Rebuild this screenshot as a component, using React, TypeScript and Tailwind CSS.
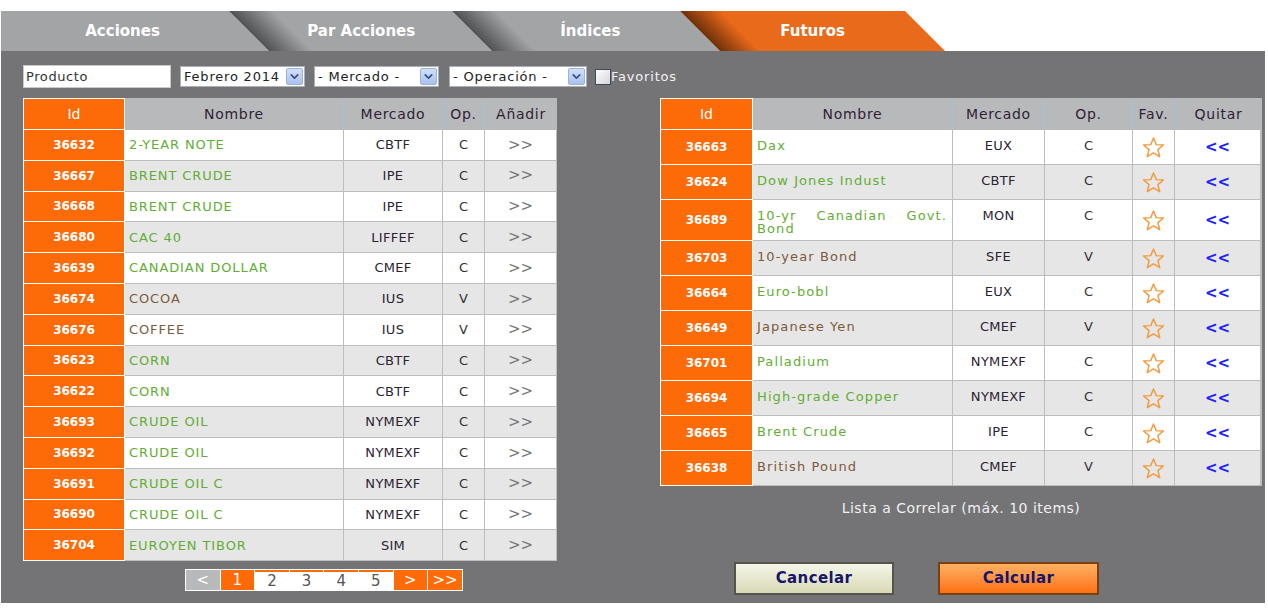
import { ChevronDown } from "lucide-react";

type Row = { id: string; name: string; market: string; op: string };

const leftRows: Row[] = [
  { id: "36632", name: "2-YEAR NOTE", market: "CBTF", op: "C" },
  { id: "36667", name: "BRENT CRUDE", market: "IPE", op: "C" },
  { id: "36668", name: "BRENT CRUDE", market: "IPE", op: "C" },
  { id: "36680", name: "CAC 40", market: "LIFFEF", op: "C" },
  { id: "36639", name: "CANADIAN DOLLAR", market: "CMEF", op: "C" },
  { id: "36674", name: "COCOA", market: "IUS", op: "V" },
  { id: "36676", name: "COFFEE", market: "IUS", op: "V" },
  { id: "36623", name: "CORN", market: "CBTF", op: "C" },
  { id: "36622", name: "CORN", market: "CBTF", op: "C" },
  { id: "36693", name: "CRUDE OIL", market: "NYMEXF", op: "C" },
  { id: "36692", name: "CRUDE OIL", market: "NYMEXF", op: "C" },
  { id: "36691", name: "CRUDE OIL C", market: "NYMEXF", op: "C" },
  { id: "36690", name: "CRUDE OIL C", market: "NYMEXF", op: "C" },
  { id: "36704", name: "EUROYEN TIBOR", market: "SIM", op: "C" },
];

const rightRows: Row[] = [
  { id: "36663", name: "Dax", market: "EUX", op: "C" },
  { id: "36624", name: "Dow Jones Indust", market: "CBTF", op: "C" },
  { id: "36689", name: "10-yr Canadian Govt. Bond", market: "MON", op: "C" },
  { id: "36703", name: "10-year Bond", market: "SFE", op: "V" },
  { id: "36664", name: "Euro-bobl", market: "EUX", op: "C" },
  { id: "36649", name: "Japanese Yen", market: "CMEF", op: "V" },
  { id: "36701", name: "Palladium", market: "NYMEXF", op: "C" },
  { id: "36694", name: "High-grade Copper", market: "NYMEXF", op: "C" },
  { id: "36665", name: "Brent Crude", market: "IPE", op: "C" },
  { id: "36638", name: "British Pound", market: "CMEF", op: "V" },
];

const Star = () => (
  <svg width="23" height="23" viewBox="0 0 24 24" fill="none" stroke="#f29a3d" strokeWidth="1.5" strokeLinejoin="round">
    <polygon points="12,2 14.9,9 22.4,9.4 16.6,14.2 18.5,21.6 12,17.5 5.5,21.6 7.4,14.2 1.6,9.4 9.1,9" />
  </svg>
);

const Select = ({ label, className }: { label: string; className: string }) => (
  <div className={`flex items-center justify-between h-[21px] bg-white border border-[#a9b0ba] pl-[3px] pr-px text-[13px] tracking-[0.8px] text-[#222] ${className}`}>
    <span>{label}</span>
    <span className="w-[17px] h-[17px] flex items-center justify-center bg-linear-to-b from-[#d3e0fb] to-[#a9c0ef] border border-[#9cb1dc] rounded-[2px]">
      <ChevronDown size={13} strokeWidth={3.2} color="#3a5286" />
    </span>
  </div>
);

const idCell = "flex items-center justify-center bg-[#fd6b09] border-l border-r border-b border-white text-white font-bold text-[12px]";
const headCell = "flex items-center justify-center bg-[#b8b9bb] border-r border-[#a7bfd7] text-[14px] tracking-[0.7px] text-[#2f1f35]";

const Tabs = () => (
  <div className="flex h-[40px] overflow-hidden">
    <div className="flex-none w-[279px] -ml-[31px] pl-[25px] h-full skew-x-45 bg-[#a3a4a6] flex items-center justify-center">
      <span className="-skew-x-45 text-white font-bold text-[15px]">Acciones</span>
    </div>
    <div className="flex-none w-[223px] h-full skew-x-45 bg-[linear-gradient(to_right,#505153,#a3a4a6_44px)] flex items-center justify-center">
      <span className="-skew-x-45 text-white font-bold text-[15px]">Par Acciones</span>
    </div>
    <div className="flex-none w-[228px] pl-[8px] h-full skew-x-45 bg-[linear-gradient(to_right,#505153,#a3a4a6_44px)] flex items-center justify-center">
      <span className="-skew-x-45 text-white font-bold text-[15px]">Índices</span>
    </div>
    <div className="flex-none w-[225px] h-full skew-x-45 bg-[linear-gradient(to_right,#6e3008,#e86a1a_40px)] flex items-center justify-center">
      <span className="-skew-x-45 text-white font-bold text-[15px]">Futuros</span>
    </div>
  </div>
);

const LeftTable = () => (
  <div className="w-[534px]">
    <div className="flex h-[32px]">
      <div className={`w-[102px] border-t ${idCell} font-normal text-[14px]`}>Id</div>
      <div className={`w-[219px] ${headCell}`}>Nombre</div>
      <div className={`w-[99px] ${headCell}`}>Mercado</div>
      <div className={`w-[42px] ${headCell}`}>Op.</div>
      <div className={`w-[72px] ${headCell} border-r-0`}>Añadir</div>
    </div>
    {leftRows.map((r, i) => {
      const bg = i % 2 ? "bg-[#e6e6e6]" : "bg-white";
      const cell = `flex items-center border-b border-r border-[#bdbdbd] ${bg}`;
      return (
        <div key={r.id + i} className="flex h-[30.8px]">
          <div className={`w-[102px] ${idCell}`}>{r.id}</div>
          <div className={`w-[219px] pl-[4px] text-[13px] tracking-[0.9px] ${cell} ${r.op === "V" ? "text-[#7b5b3b]" : "text-[#62ad34]"}`}>{r.name}</div>
          <div className={`w-[99px] justify-center text-[13px] tracking-[0.3px] text-[#2b2333] ${cell}`}>{r.market}</div>
          <div className={`w-[42px] justify-center text-[13px] text-[#333] ${cell}`}>{r.op}</div>
          <div className={`w-[72px] justify-center text-[15px] text-[#777] ${cell}`}>&gt;&gt;</div>
        </div>
      );
    })}
  </div>
);

const RightTable = () => (
  <div className="w-[602px]">
    <div className="flex h-[32px]">
      <div className={`w-[93px] border-t ${idCell} font-normal text-[14px]`}>Id</div>
      <div className={`w-[200px] ${headCell}`}>Nombre</div>
      <div className={`w-[92px] ${headCell}`}>Mercado</div>
      <div className={`w-[88px] ${headCell}`}>Op.</div>
      <div className={`w-[42px] ${headCell}`}>Fav.</div>
      <div className={`w-[87px] ${headCell} border-r-0`}>Quitar</div>
    </div>
    {rightRows.map((r, i) => {
      const bg = i % 2 ? "bg-[#e6e6e6]" : "bg-white";
      const cell = `border-b border-r border-[#bdbdbd] ${bg}`;
      return (
        <div key={r.id} className={`flex ${i === 2 ? "h-[41px]" : "h-[35px]"}`}>
          <div className={`w-[93px] ${idCell}`}>{r.id}</div>
          <div className={`w-[200px] pl-[4px] pr-[5px] pt-[9px] leading-[13px] text-[13px] tracking-[1.1px] text-justify ${cell} ${r.op === "V" ? "text-[#7b5b3b]" : "text-[#62ad34]"}`}>{r.name}</div>
          <div className={`w-[92px] pt-[9px] leading-[14px] text-center text-[13px] tracking-[0.3px] text-[#2b2333] ${cell}`}>{r.market}</div>
          <div className={`w-[88px] pt-[9px] leading-[14px] text-center text-[13px] text-[#333] ${cell}`}>{r.op}</div>
          <div className={`w-[42px] flex items-center justify-center ${cell}`}><Star /></div>
          <div className={`w-[87px] flex items-center justify-center font-bold text-[15px] text-[#1f1fff] ${cell} border-[#b3b3b3] border-r-2`}>&lt;&lt;</div>
        </div>
      );
    })}
  </div>
);

const Pagination = () => (
  <div className="ml-[162px] mt-[8px] flex w-fit p-px gap-px bg-white h-[22px] text-[15px]">
    <span className="w-[33.6px] flex items-center justify-center bg-[#b8b9bb] text-white">&lt;</span>
    <span className="w-[33.6px] flex items-center justify-center bg-[#fd6b09] text-white">1</span>
    {["2", "3", "4", "5"].map((p) => (
      <span key={p} className="w-[33.6px] flex items-center justify-center bg-white border-t-2 border-[#fd6b09] text-[#555]">{p}</span>
    ))}
    <span className="w-[33.6px] flex items-center justify-center bg-[#fd6b09] text-white">&gt;</span>
    <span className="w-[33.6px] flex items-center justify-center bg-[#fd6b09] text-white">&gt;&gt;</span>
  </div>
);

export default function App() {
  return (
    <div className="h-[612px] bg-white pt-[11px] pl-px font-['DejaVu_Sans',Verdana,sans-serif]">
      <div className="w-[1264px]">
        <Tabs />
        <div className="h-[552px] bg-[#747476] pl-[22px] pt-[14px]">
          {/* Filtros */}
          <div className="flex items-center h-[23px]">
            <div className="w-[148px] h-[23px] bg-white border border-[#c9c9c9] pl-[2px] text-[13px] tracking-[0.6px] text-[#333] flex items-center">Producto</div>
            <Select label="Febrero 2014" className="ml-[9px] w-[125px]" />
            <Select label="- Mercado -" className="ml-[9px] w-[125px]" />
            <Select label="- Operación -" className="ml-[10px] w-[138px]" />
            <span className="ml-[8px] w-[16px] h-[16px] border border-[#3b4a63] bg-linear-to-br from-white to-[#d6d6d6]" />
            <span className="text-[13px] tracking-[0.8px] text-[#f2f2f2]">Favoritos</span>
          </div>

          <div className="flex mt-[10px]">
            <div>
              <LeftTable />
              <Pagination />
            </div>
            <div className="ml-[103px]">
              <RightTable />
              <div className="mt-[14px] text-center text-[14px] tracking-[0.5px] text-[#f0f0f0] leading-[16px]">Lista a Correlar (máx. 10 items)</div>
              <div className="flex mt-[46px] ml-[74px]">
                <button className="w-[160px] h-[33px] border-2 border-[#55554d] bg-linear-to-b from-[#f5f5e8] to-[#d9d9b6] text-[#16166a] font-bold text-[15px] tracking-[0.4px]">Cancelar</button>
                <button className="ml-[44px] w-[161px] h-[33px] border-2 border-[#7a4010] bg-linear-to-b from-[#ffb060] to-[#ff7008] text-[#16166a] font-bold text-[15px] tracking-[0.4px]">Calcular</button>
              </div>
            </div>
          </div>
        </div>
      </div>
    </div>
  );
}
